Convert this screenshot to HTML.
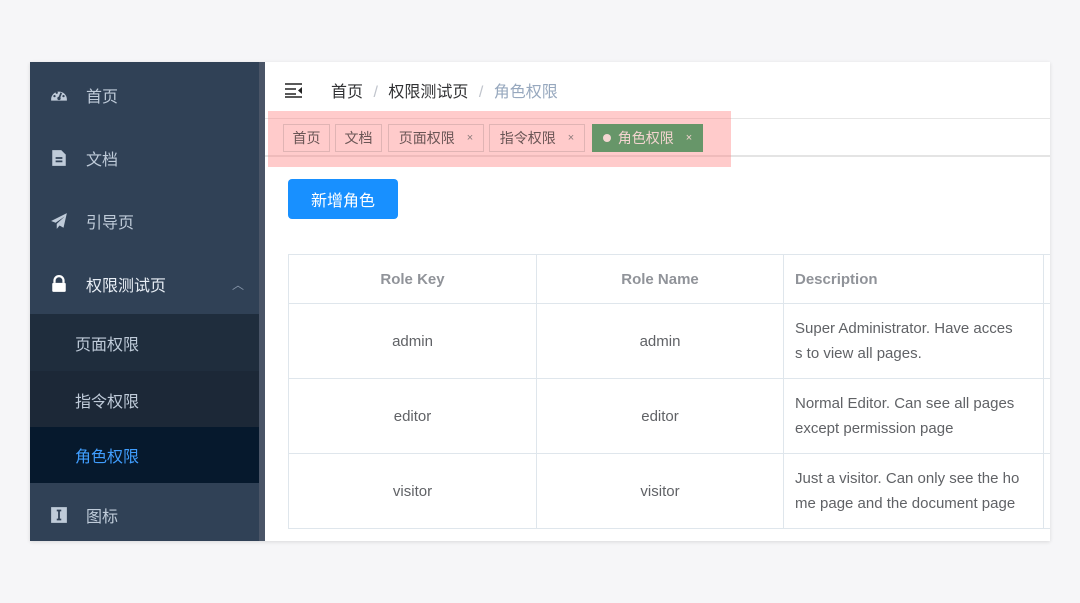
<!DOCTYPE html>
<html><head><meta charset="utf-8"><style>
*{margin:0;padding:0;box-sizing:border-box}
body{width:1080px;height:603px;background:#f6f6f8;font-family:"Liberation Sans","Noto Sans CJK SC",sans-serif;position:relative;overflow:hidden}
.frame{position:absolute;left:30px;top:62px;width:1020px;height:479px;background:#fff;overflow:hidden;box-shadow:0 1px 4px rgba(0,0,0,.12)}
.side{position:absolute;left:0;top:0;width:235px;height:479px;background:#304156}
.scroll{position:absolute;left:229px;top:0;width:6px;height:479px;background:#4a5567}
.item{position:absolute;left:0;width:229px;height:56px;color:#bfcbd9;font-size:16px;display:flex;align-items:center}
.item .ic{position:absolute;left:20px;width:18px;height:18px}
.item span{position:absolute;left:56px}
.sub{position:absolute;left:0;width:229px;height:57px;color:#bfcbd9;font-size:16px;padding-left:45px;display:flex;align-items:center}
.main{position:absolute;left:235px;top:0;right:0;height:479px;overflow:hidden}
.abs{position:absolute}
.tag{position:absolute;top:62px;height:28px;border:1px solid #e0b4b4;font-size:14px;color:#6a5555;display:flex;align-items:center;justify-content:center;white-space:nowrap}
.tag i{font-style:normal;font-size:11px;margin-left:12px;color:#8a7a7a}
table{position:absolute;left:23px;top:192px;border-collapse:collapse;font-size:15px;color:#606266;table-layout:fixed;width:800px}
td,th{border:1px solid #dfe6ec;height:75px;text-align:center;font-weight:normal}
th{height:49px;color:#909399;font-weight:bold}
td.d,th.d{text-align:left;padding:0 11px;line-height:25px}
</style></head><body>
<div class="frame">
 <div class="side">
  <div class="item" style="top:5px"><svg class="ic" viewBox="0 0 16 16"><path d="M1 12a7 7 0 0 1 14 0v1H1z" fill="#bfcbd9"/><circle cx="8" cy="11" r="1.5" fill="#304156"/><path d="M8 11 10 6" stroke="#304156" stroke-width="1.5"/><circle cx="4" cy="9" r="1" fill="#304156"/><circle cx="12" cy="9" r="1" fill="#304156"/><circle cx="6" cy="6" r="1" fill="#304156"/></svg><span>首页</span></div>
  <div class="item" style="top:68px"><svg class="ic" viewBox="0 0 16 16"><path d="M2 1h8l4 4v10H2z" fill="#bfcbd9"/><path d="M5 8h6M5 11h6" stroke="#304156" stroke-width="1.5"/></svg><span>文档</span></div>
  <div class="item" style="top:131px"><svg class="ic" viewBox="0 0 16 16"><path d="M15 1 1 8l4 1.5L13 4 6 10.5V15l2.5-3 3.5 2z" fill="#bfcbd9"/></svg><span>引导页</span></div>
  <div class="item" style="top:194px"><svg class="ic" viewBox="0 0 16 16"><path d="M4 7V5a4 4 0 0 1 8 0v2" stroke="#fff" stroke-width="2" fill="none"/><rect x="2" y="7" width="12" height="8" rx="1" fill="#fff"/></svg><span style="color:#e8eef5">权限测试页</span><b style="position:absolute;left:202px;font-weight:normal;color:#8594a8;font-size:12px">︿</b></div>
  <div class="sub" style="top:252px;background:#1f2d3d">页面权限</div>
  <div class="sub" style="top:309px;background:#1c2837">指令权限</div>
  <div class="sub" style="top:365px;height:56px;background:#06192d;color:#409eff">角色权限</div>
  <div class="item" style="top:425px"><svg class="ic" viewBox="0 0 16 16"><rect x="1" y="1" width="14" height="14" fill="#bfcbd9"/><path d="M6 4h4M6 12h4M8 4v8" stroke="#304156" stroke-width="1.6"/></svg><span>图标</span></div>
  <div class="scroll"></div>
 </div>
 <div class="main">
  <svg class="abs" style="left:20px;top:20px" width="18" height="16" viewBox="0 0 18 16"><path d="M0 2h17M0 7h11M0 12h11M0 15h17" stroke="#222" stroke-width="1.6"/><path d="M17 5v7l-4-3.5z" fill="#222"/></svg>
  <div class="abs" style="left:66px;top:16px;font-size:16px;color:#303133">首页 <span style="color:#c0c4cc;margin:0 6px">/</span> 权限测试页 <span style="color:#c0c4cc;margin:0 6px">/</span> <span style="color:#97a8be">角色权限</span></div>
  <div class="abs" style="left:0;top:56px;right:0;height:1px;background:#e6e6e6"></div>
  <div class="abs" style="left:0;top:93px;right:0;height:2px;background:#e4e4e4"></div>
  <div class="abs" style="left:3px;top:49px;width:463px;height:56px;background:rgba(255,130,130,.42)"></div>
  <div class="tag" style="left:18px;width:47px">首页</div>
  <div class="tag" style="left:70px;width:47px">文档</div>
  <div class="tag" style="left:123px;width:96px">页面权限<i>×</i></div>
  <div class="tag" style="left:224px;width:96px">指令权限<i>×</i></div>
  <div class="tag" style="left:327px;width:111px;background:#679669;border-color:#679669;color:#f3d4d0"><span style="width:8px;height:8px;border-radius:50%;background:#f5d6d2;margin-right:7px"></span>角色权限<i style="color:#f3d4d0">×</i></div>
  <div class="abs" style="left:23px;top:117px;width:110px;height:40px;background:#1890ff;border-radius:4px;color:#fff;font-size:16px;display:flex;align-items:center;justify-content:center">新增角色</div>
  <table>
   <colgroup><col style="width:248px"><col style="width:247px"><col style="width:260px"><col style="width:45px"></colgroup>
   <tr><th>Role Key</th><th>Role Name</th><th class="d">Description</th><th></th></tr>
   <tr><td>admin</td><td>admin</td><td class="d">Super Administrator. Have acces<br>s to view all pages.</td><td></td></tr>
   <tr><td>editor</td><td>editor</td><td class="d">Normal Editor. Can see all pages<br>except permission page</td><td></td></tr>
   <tr><td>visitor</td><td>visitor</td><td class="d">Just a visitor. Can only see the ho<br>me page and the document page</td><td></td></tr>
  </table>
 </div>
</div>
</body></html>
